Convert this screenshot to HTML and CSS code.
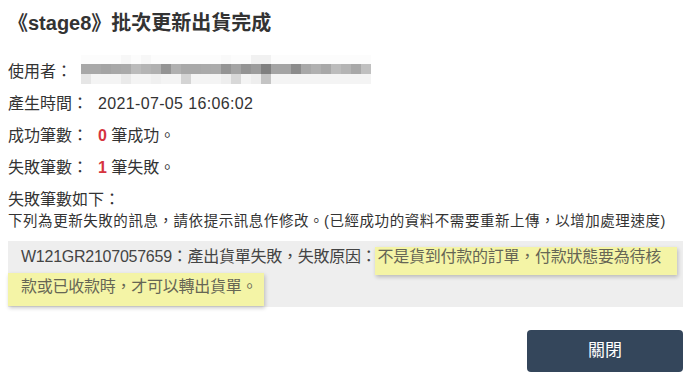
FILE: index.html
```html
<!DOCTYPE html>
<html lang="zh-Hant">
<head>
<meta charset="utf-8">
<title>批次更新出貨完成</title>
<link rel="stylesheet" href="styles.css">
</head>
<body>
<div class="dialog">
  <h1 class="title">《stage8》批次更新出貨完成</h1>
  <div class="row row-user">
    <span class="label">使用者：</span>
    <svg class="mosaic" width="290" height="29" viewBox="0 0 290 29" aria-hidden="true">
      <rect x="0" y="0" width="290" height="9" fill="#fcfcfc"/>
      <rect x="40" y="0" width="10" height="9" fill="#f7f7f7"/>
      <rect x="60" y="0" width="10" height="9" fill="#f7f7f7"/>
      <rect x="140" y="0" width="10" height="9" fill="#f9f9f9"/>
      <rect x="170" y="0" width="20" height="9" fill="#f1f1f1"/>
      <rect x="0" y="9" width="10" height="10" fill="#a8a8a8"/>
      <rect x="10" y="9" width="10" height="10" fill="#a8a8a8"/>
      <rect x="20" y="9" width="10" height="10" fill="#a4a4a4"/>
      <rect x="30" y="9" width="10" height="10" fill="#a8a8a8"/>
      <rect x="40" y="9" width="10" height="10" fill="#aaaaaa"/>
      <rect x="50" y="9" width="10" height="10" fill="#bbbbbb"/>
      <rect x="60" y="9" width="10" height="10" fill="#b4b4b4"/>
      <rect x="70" y="9" width="10" height="10" fill="#b0b0b0"/>
      <rect x="80" y="9" width="10" height="10" fill="#949494"/>
      <rect x="90" y="9" width="10" height="10" fill="#b0b0b0"/>
      <rect x="100" y="9" width="10" height="10" fill="#a8a8a8"/>
      <rect x="110" y="9" width="10" height="10" fill="#a8a8a8"/>
      <rect x="120" y="9" width="10" height="10" fill="#aaaaaa"/>
      <rect x="130" y="9" width="10" height="10" fill="#ababab"/>
      <rect x="140" y="9" width="10" height="10" fill="#949494"/>
      <rect x="150" y="9" width="10" height="10" fill="#a4a4a4"/>
      <rect x="160" y="9" width="10" height="10" fill="#949494"/>
      <rect x="170" y="9" width="10" height="10" fill="#9c9c9c"/>
      <rect x="180" y="9" width="10" height="10" fill="#808080"/>
      <rect x="190" y="9" width="10" height="10" fill="#a4a4a4"/>
      <rect x="200" y="9" width="10" height="10" fill="#a4a4a4"/>
      <rect x="210" y="9" width="10" height="10" fill="#8c8c8c"/>
      <rect x="220" y="9" width="10" height="10" fill="#a8a8a8"/>
      <rect x="230" y="9" width="10" height="10" fill="#b0b0b0"/>
      <rect x="240" y="9" width="10" height="10" fill="#a8a8a8"/>
      <rect x="250" y="9" width="10" height="10" fill="#bcbcbc"/>
      <rect x="260" y="9" width="10" height="10" fill="#b4b4b4"/>
      <rect x="270" y="9" width="10" height="10" fill="#a8a8a8"/>
      <rect x="280" y="9" width="10" height="10" fill="#c0c0c0"/>
      <rect x="0" y="19" width="290" height="10" fill="#f4f4f4"/>
      <rect x="0" y="19" width="10" height="10" fill="#e6e6e6"/>
      <rect x="40" y="19" width="10" height="10" fill="#eaeaea"/>
      <rect x="70" y="19" width="10" height="10" fill="#f0f0f0"/>
      <rect x="100" y="19" width="10" height="10" fill="#d4d4d4"/>
      <rect x="140" y="19" width="10" height="10" fill="#eeeeee"/>
      <rect x="150" y="19" width="10" height="10" fill="#d8d8d8"/>
      <rect x="170" y="19" width="10" height="10" fill="#eeeeee"/>
      <rect x="180" y="19" width="10" height="10" fill="#c4c4c4"/>
    </svg>
  </div>
  <div class="row"><span class="label">產生時間：</span><span class="val">2021-07-05 16:06:02</span></div>
  <div class="row"><span class="label">成功筆數：</span><b class="num">0</b> 筆成功。</div>
  <div class="row"><span class="label">失敗筆數：</span><b class="num">1</b> 筆失敗。</div>
  <div class="row row-head">失敗筆數如下：</div>
  <div class="note">下列為更新失敗的訊息，請依提示訊息作修改。(已經成功的資料不需要重新上傳，以增加處理速度)</div>
  <div class="errors">
    <div class="err-line">W121GR2107057659：產出貨單失敗，失敗原因：<span class="hl hl-first">不是貨到付款的訂單，付款狀態要為待核</span></div>
    <div class="err-line"><span class="hl hl-last">款或已收款時，才可以轉出貨單。</span></div>
  </div>
  <div class="actions">
    <button class="btn-close" type="button">關閉</button>
  </div>
</div>
</body>
</html>
```
FILE: styles.css
```css
html, body {
  margin: 0;
  padding: 0;
  background: #ffffff;
}

body {
  font-family: "Liberation Sans", "Noto Sans CJK TC", sans-serif;
  font-size: 16px;
  color: #333333;
}

.dialog {
  width: 693px;
  height: 381px;
  box-sizing: border-box;
  padding: 10px 10px 0 8px;
  overflow: hidden;
}

.title {
  margin: 0 0 20px 0;
  font-size: 20px;
  line-height: 26px;
  font-weight: bold;
  color: #333333;
}

.row {
  line-height: 32px;
  height: 32px;
  white-space: nowrap;
}

.label {
  margin-right: 10px;
}

.row-user {
  display: flex;
  align-items: center;
}

.row-user .label {
  margin-right: 0;
}

.mosaic {
  display: block;
  margin-left: 9px;
  margin-bottom: 5px;
}

.val {
  letter-spacing: 0.35px;
}

.num {
  color: #d6343f;
  font-weight: bold;
}

.row-head {
  margin-top: 4px;
  line-height: 24px;
  height: 24px;
}

.note {
  font-size: 14.5px;
  line-height: 18px;
  letter-spacing: 0.55px;
  color: #333333;
  white-space: nowrap;
}

.errors {
  margin-top: 11px;
  background: #eeeeee;
  padding: 1px 0 5px 13px;
  color: #444444;
  letter-spacing: -0.25px;
}

.err-line {
  line-height: 30px;
  height: 30px;
  white-space: nowrap;
}

.hl {
  background: #f4f4a6;
  color: #666655;
  box-shadow: 1px 2px 4px rgba(0, 0, 0, 0.22);
}

.hl-first {
  padding: 1px 16px 10px 3px;
  margin-left: -2px;
}

.hl-last {
  padding: 5px 7px 11px 13px;
  margin-left: -13px;
}

.actions {
  display: flex;
  justify-content: flex-end;
  margin-top: 23px;
}

.btn-close {
  width: 156px;
  height: 42px;
  border: none;
  border-radius: 4px;
  background: #34465b;
  color: #ffffff;
  font-family: "Liberation Sans", "Noto Sans CJK TC", sans-serif;
  font-size: 17px;
  line-height: 42px;
  padding: 0;
}
```
